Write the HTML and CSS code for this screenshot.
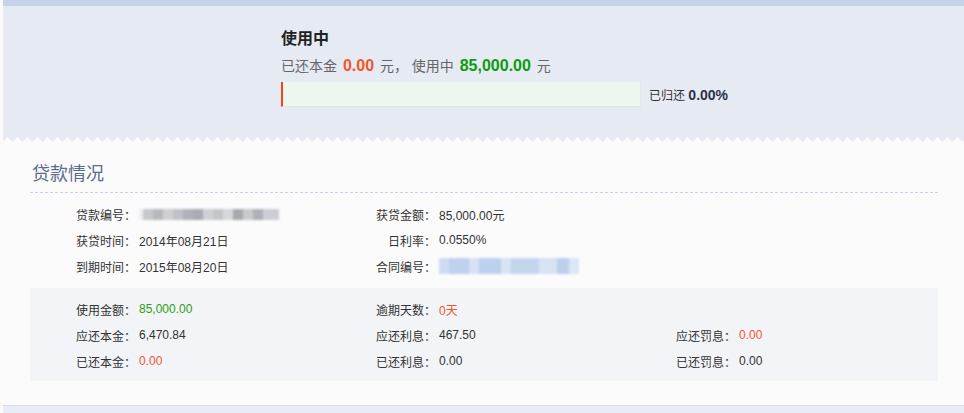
FILE: index.html
```html
<!DOCTYPE html>
<html lang="zh-CN">
<head>
  <meta charset="UTF-8">
  <title>贷款详情</title>
  <link rel="stylesheet" href="styles.css">
</head>
<body>
  <div class="page">
    <div class="status">
      <div class="status-inner">
        <h2 class="status-title">使用中</h2>
        <div class="status-sum">已还本金 <b class="red">0.00</b> 元， 使用中 <b class="green">85,000.00</b> 元</div>
        <div class="progress-row">
          <div class="progress"><div class="progress-fill" style="width: 0%"></div></div>
          <span class="progress-text">已归还 <b>0.00%</b></span>
        </div>
      </div>
    </div>
    <div class="zigzag"></div>

    <div class="section">
      <h3 class="section-title">贷款情况</h3>

      <div class="grid">
        <div class="cell"><span class="lbl">贷款编号：</span><span class="blur blur-grey"></span></div>
        <div class="cell"><span class="lbl">获贷金额：</span><span class="val">85,000.00元</span></div>
        <div class="cell"></div>
        <div class="cell"><span class="lbl">获贷时间：</span><span class="val">2014年08月21日</span></div>
        <div class="cell"><span class="lbl">日利率：</span><span class="val">0.0550%</span></div>
        <div class="cell"></div>
        <div class="cell"><span class="lbl">到期时间：</span><span class="val">2015年08月20日</span></div>
        <div class="cell"><span class="lbl">合同编号：</span><span class="blur blur-blue"></span></div>
        <div class="cell"></div>
      </div>

      <div class="grid grid-box">
        <div class="cell"><span class="lbl">使用金额：</span><span class="val green">85,000.00</span></div>
        <div class="cell"><span class="lbl">逾期天数：</span><span class="val red">0天</span></div>
        <div class="cell"></div>
        <div class="cell"><span class="lbl">应还本金：</span><span class="val">6,470.84</span></div>
        <div class="cell"><span class="lbl">应还利息：</span><span class="val">467.50</span></div>
        <div class="cell"><span class="lbl">应还罚息：</span><span class="val red">0.00</span></div>
        <div class="cell"><span class="lbl">已还本金：</span><span class="val red">0.00</span></div>
        <div class="cell"><span class="lbl">已还利息：</span><span class="val">0.00</span></div>
        <div class="cell"><span class="lbl">已还罚息：</span><span class="val">0.00</span></div>
      </div>
    </div>

    <div class="footer"></div>
  </div>
</body>
</html>
```

FILE: styles.css
```css
body { margin: 0; background: #fbfbfc; font-family: "Liberation Sans", "Noto Sans CJK SC", sans-serif; color: #333; font-size: 12px; }
.page { margin-left: 3px; }
.status { background: #e6eaf3; border-top: 6px solid #c7d1e8; height: 131px; box-sizing: content-box; }
.status-inner { padding: 21px 0 0 278px; }
.status-title { margin: 0; font-size: 16px; line-height: 24px; font-weight: bold; color: #222; }
.status-sum { margin-top: 3px; font-size: 14px; line-height: 24px; color: #666; }
.status-sum b { font-size: 16px; margin: 0 2px; }
.red { color: #f2562a; }
.green { color: #0d9a0d; }
.progress-row { display: flex; align-items: center; margin-top: 4px; }
.progress { width: 357px; height: 24px; background: #eef7ee; border-left: 2px solid #e94b1b; border-bottom: 1px solid #dde3e6; border-right: 1px solid #e2e8e4; }
.progress-fill { height: 100%; background: #7cc576; }
.progress-text { margin-left: 8px; font-size: 12px; color: #333; }
.progress-text b { font-size: 14px; color: #2d3346; }
.zigzag { height: 5px; background: linear-gradient(135deg, #e6eaf3 25%, transparent 25%), linear-gradient(225deg, #e6eaf3 25%, transparent 25%); background-size: 10px 10px; background-repeat: repeat-x; }
.section { margin: 0 26px 0 27px; }
.section-title { margin: 0; padding-top: 19px; padding-bottom: 5px; padding-left: 2px; font-size: 18px; line-height: 26px; font-weight: normal; color: #5a6b8c; border-bottom: 1px dashed #c3d2e8; }
.grid { display: grid; grid-template-columns: 300px 300px 300px; margin-top: 8px; }
.grid-box { margin-top: 9px; padding: 8px 0 7px; background: #f2f4f8; }
.cell { display: flex; align-items: center; height: 26px; }
.lbl { width: 106px; text-align: right; color: #333; }
.val { padding-left: 3px; color: #333; }
.val.green { color: #2e9d14; }
.val.red { color: #f2562a; }
.blur { display: inline-block; margin-left: 3px; height: 11px; width: 140px; filter: blur(0.8px); }
.blur-grey { background: linear-gradient(90deg, #eceef2 0 4px, #c7c8cc 4px 14px, #b8b9be 14px 24px, #cfcfd2 24px 34px, #c2c2c6 34px 44px, #b0b2b8 44px 54px, #a9abb2 54px 64px, #cfd0d4 64px 74px, #c4c5c9 74px 84px, #d6d7da 84px 94px, #a8a9ae 94px 104px, #c9cacd 104px 114px, #b0b1b7 114px 124px, #cdced2 124px 140px); }
.blur-blue { height: 16px; background: linear-gradient(90deg, #cfdcf0 0 10px, #bfd1ee 10px 30px, #d6e1f2 30px 40px, #bdd0ed 40px 62px, #d8e3f3 62px 72px, #c4d5ee 72px 100px, #d7e2f3 100px 118px, #bcd0ee 118px 130px, #dce6f4 130px 140px); }
.footer { margin-top: 24px; height: 8px; border-top: 1px solid #d5dbe8; background: #e8ecf4; }
```
